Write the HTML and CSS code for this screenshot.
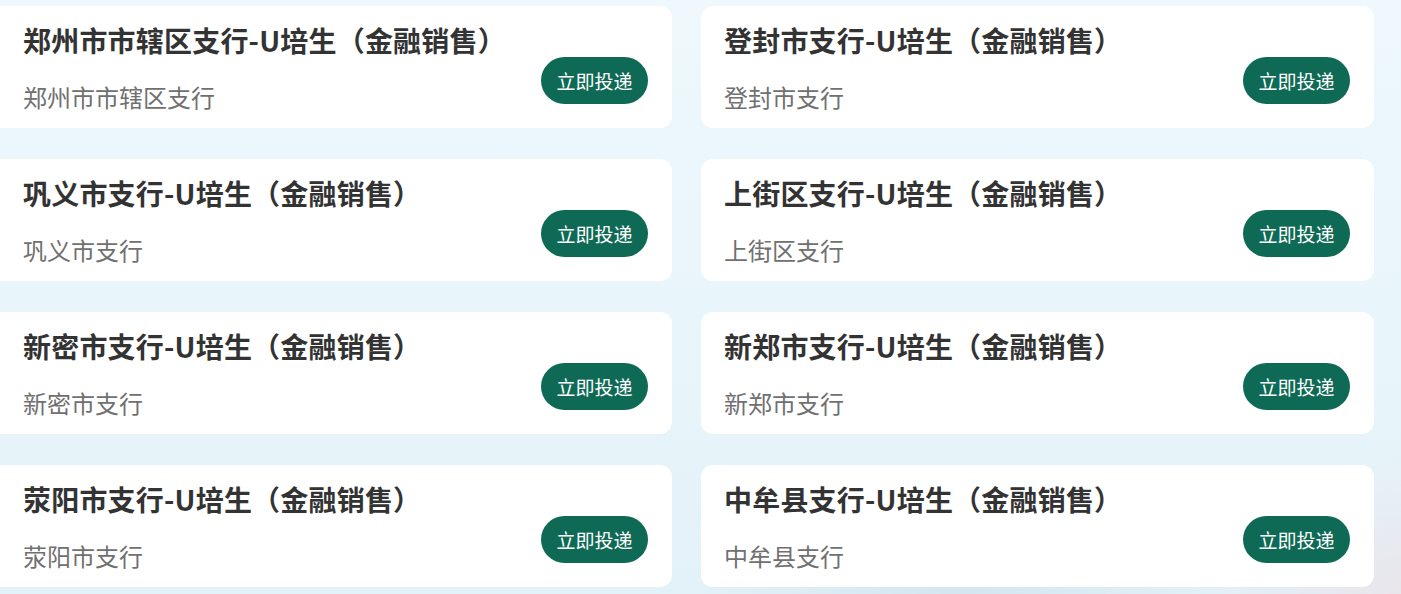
FILE: index.html
```html
<!DOCTYPE html>
<html lang="zh">
<head>
<meta charset="utf-8">
<link rel="stylesheet" href="styles.css">
</head>
<body>
<div class="grid">
  <div class="card"><div class="info"><div class="title">郑州市市辖区支行-U培生（金融销售）</div><div class="sub">郑州市市辖区支行</div></div><button class="btn">立即投递</button></div>
  <div class="card"><div class="info"><div class="title">登封市支行-U培生（金融销售）</div><div class="sub">登封市支行</div></div><button class="btn">立即投递</button></div>
  <div class="card"><div class="info"><div class="title">巩义市支行-U培生（金融销售）</div><div class="sub">巩义市支行</div></div><button class="btn">立即投递</button></div>
  <div class="card"><div class="info"><div class="title">上街区支行-U培生（金融销售）</div><div class="sub">上街区支行</div></div><button class="btn">立即投递</button></div>
  <div class="card"><div class="info"><div class="title">新密市支行-U培生（金融销售）</div><div class="sub">新密市支行</div></div><button class="btn">立即投递</button></div>
  <div class="card"><div class="info"><div class="title">新郑市支行-U培生（金融销售）</div><div class="sub">新郑市支行</div></div><button class="btn">立即投递</button></div>
  <div class="card"><div class="info"><div class="title">荥阳市支行-U培生（金融销售）</div><div class="sub">荥阳市支行</div></div><button class="btn">立即投递</button></div>
  <div class="card"><div class="info"><div class="title">中牟县支行-U培生（金融销售）</div><div class="sub">中牟县支行</div></div><button class="btn">立即投递</button></div>
</div>
</body>
</html>
```
FILE: styles.css
```css
html, body {
  margin: 0;
  padding: 0;
}
body {
  width: 1401px;
  height: 594px;
  overflow: hidden;
  font-family: "Noto Sans CJK SC", "Noto Sans", sans-serif;
  background:
    radial-gradient(ellipse 260px 120px at 960px 600px, rgba(200, 220, 235, 0.55), rgba(200, 220, 235, 0) 100%),
    radial-gradient(ellipse 200px 140px at 1401px 594px, rgba(235, 225, 230, 0.7), rgba(235, 225, 230, 0) 100%),
    linear-gradient(180deg, #eef8fd 0%, #e8f5fb 60%, #e3f1f8 100%);
}
.grid {
  display: grid;
  grid-template-columns: 672px 673px;
  column-gap: 29px;
  row-gap: 31px;
  padding-top: 6px;
}
.card {
  background: #ffffff;
  border-radius: 12px;
  height: 122px;
  box-sizing: border-box;
  padding: 16px 24px 14px 23px;
  display: flex;
  justify-content: space-between;
}
.card:nth-child(odd) {
  border-top-left-radius: 0;
  border-bottom-left-radius: 0;
}
.info {
  display: flex;
  flex-direction: column;
}
.title {
  font-size: 28px;
  line-height: 36px;
  font-weight: 700;
  color: #333333;
  white-space: nowrap;
  letter-spacing: 0.2px;
}
.sub {
  margin-top: 23px;
  font-size: 24px;
  line-height: 32px;
  color: #707070;
  white-space: nowrap;
}
.btn {
  align-self: flex-end;
  margin-bottom: 10px;
  width: 107px;
  height: 47px;
  border: none;
  border-radius: 24px;
  background: #0f6a55;
  color: #ffffff;
  font-family: "Noto Sans CJK SC", "Noto Sans", sans-serif;
  font-size: 19px;
  padding: 0;
}
```
